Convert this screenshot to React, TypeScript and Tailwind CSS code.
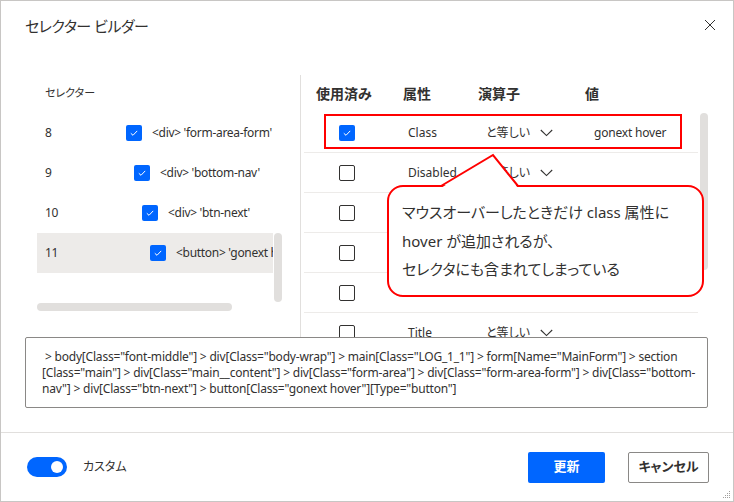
import React from 'react';

const leftRows = [
  { n: 8, depth: 0, label: "<div> 'form-area-form'" },
  { n: 9, depth: 1, label: "<div> 'bottom-nav'" },
  { n: 10, depth: 2, label: "<div> 'btn-next'" },
  { n: 11, depth: 3, label: "<button> 'gonext hover'" },
];

const indents = ['w-0', 'w-[8px]', 'w-[16px]', 'w-[24px]'];

const attrRows = [
  { on: true, attr: 'Class', op: 'と等しい', val: 'gonext hover' },
  { on: false, attr: 'Disabled', op: 'と等しい', val: '' },
  { on: false, attr: '', op: '', val: '' },
  { on: false, attr: '', op: '', val: '' },
  { on: false, attr: '', op: '', val: '' },
  { on: false, attr: 'Title', op: 'と等しい', val: '' },
];

function Check({ on }: { on: boolean }) {
  if (!on) return <span className="block h-4 w-4 shrink-0 rounded-[2px] border border-[#323130]" />;
  return (
    <span className="flex h-4 w-4 shrink-0 items-center justify-center rounded-[2px] bg-[#0066ff]">
      <svg width="10" height="10" viewBox="0 0 10 10">
        <path d="M1.8 5.3 L4 7.3 L8.2 2.9" fill="none" stroke="white" strokeWidth="1" />
      </svg>
    </span>
  );
}

function Chevron() {
  return (
    <svg width="13" height="8" viewBox="0 0 13 8">
      <path d="M0.8 1 L6.5 6.6 L12.2 1" fill="none" stroke="#323130" strokeWidth="1.1" />
    </svg>
  );
}

export default function App() {
  return (
    <div className="relative flex h-[502px] w-[734px] flex-col overflow-hidden border border-[#c8c6c4] bg-white font-['Noto_Sans','Noto_Sans_CJK_JP',sans-serif] text-[#323130] [font-feature-settings:'palt']">
      {/* header */}
      <div className="flex h-[51px] shrink-0 items-center justify-between pl-[24px] pr-[17px]">
        <span className="text-[15px] tracking-[-0.5px]">セレクター ビルダー</span>
        <svg width="12" height="12" viewBox="0 0 12 12" className="mb-[4px]">
          <path d="M1 1 L11 11 M11 1 L1 11" stroke="#323130" strokeWidth="1" />
        </svg>
      </div>

      {/* body */}
      <div className="mt-[21px] flex h-[264px] shrink-0 overflow-hidden">
        <div className="flex w-[282px] shrink-0 flex-col pl-[36px]">
          <div className="flex h-[40px] shrink-0 items-center pl-[8px] text-[11px]">セレクター</div>
          <div className="flex shrink-0 items-start">
            <div className="flex w-[236px] flex-col overflow-hidden">
              {leftRows.map((r) => (
                <div
                  key={r.n}
                  className={`flex h-[40px] shrink-0 items-center pl-[8px] text-[12px] tracking-[-0.3px] whitespace-nowrap ${r.n === 11 ? 'bg-[#edebe9]' : ''}`}
                >
                  <span className="w-[81px] shrink-0">{r.n}</span>
                  <span className={`${indents[r.depth]} shrink-0`} />
                  <Check on />
                  <span className="ml-[10px]">{r.label}</span>
                </div>
              ))}
            </div>
            <div className="ml-[1px] mt-[120px] h-[69px] w-[8px] rounded-full bg-[#e1dfdd]" />
          </div>
          <div className="mt-[1px] h-[8px] w-[195px] shrink-0 rounded-full bg-[#e1dfdd]" />
        </div>

        <div className="ml-[17px] mt-[2px] flex border-l border-[#e1dfdd] pl-[3px]">
          <div className="flex w-[394px] flex-col">
            <div className="flex h-[38px] shrink-0 items-center pb-[2px] text-[14px] font-semibold">
              <span className="w-[86px] pl-[12px]">使用済み</span>
              <span className="w-[80px] pl-[13px]">属性</span>
              <span className="w-[100px] pl-[8px]">演算子</span>
              <span className="w-[128px] pl-[15px]">値</span>
            </div>
            {attrRows.map((r, i) => (
              <div key={i} className="flex h-[40px] shrink-0 items-center border-b border-[#edebe9] text-[12px] whitespace-nowrap">
                <span className="w-[86px] pl-[35px]">
                  <Check on={r.on} />
                </span>
                <span className="w-[80px] pl-[18px]">{r.attr}</span>
                <span className="flex w-[100px] items-center pl-[16px]">
                  {r.op && (
                    <>
                      <span className="w-[54px]">{r.op}</span>
                      <Chevron />
                    </>
                  )}
                </span>
                <span className="w-[128px] pl-[24px] tracking-[-0.2px]">{r.val}</span>
              </div>
            ))}
          </div>
          <div className="ml-[2px] mt-[38px] h-[157px] w-[8px] shrink-0 rounded-full bg-[#e1dfdd]" />
        </div>
      </div>

      {/* selector text */}
      <div className="ml-[24px] h-[71px] w-[683px] shrink-0 rounded-[2px] border border-[#8a8886] pl-[16px] pt-[11px] text-[12px] leading-[16px] tracking-[-0.2px] whitespace-pre">
        <div>{' > body[Class="font-middle"] > div[Class="body-wrap"] > main[Class="LOG_1_1"] > form[Name="MainForm"] > section'}</div>
        <div>{'[Class="main"] > div[Class="main__content"] > div[Class="form-area"] > div[Class="form-area-form"] > div[Class="bottom-'}</div>
        <div>{'nav"] > div[Class="btn-next"] > button[Class="gonext hover"][Type="button"]'}</div>
      </div>

      {/* footer */}
      <div className="mt-[24px] flex flex-1 items-center justify-between border-t border-[#e1dfdd] pl-[26px] pr-[24px]">
        <div className="flex items-center">
          <div className="flex h-[20px] w-[40px] items-center justify-end rounded-full bg-[#0066ff] pr-[4px]">
            <span className="h-[12px] w-[12px] rounded-full bg-white" />
          </div>
          <span className="ml-[16px] text-[12px]">カスタム</span>
        </div>
        <div className="flex items-center">
          <button className="h-[31px] w-[77px] rounded-[2px] bg-[#0066ff] text-[13px] font-semibold text-white">更新</button>
          <button className="ml-[23px] h-[31px] w-[81px] rounded-[2px] border border-[#8a8886] bg-white text-[13px] font-semibold">キャンセル</button>
        </div>
      </div>

      {/* resize grip */}
      <svg width="9" height="9" viewBox="0 0 9 9" className="absolute bottom-[2px] right-[2px]">
        <rect x="7" y="1" width="1" height="1" fill="#a19f9d" />
        <rect x="5" y="3" width="1" height="1" fill="#a19f9d" />
        <rect x="7" y="3" width="1" height="1" fill="#a19f9d" />
        <rect x="3" y="5" width="1" height="1" fill="#a19f9d" />
        <rect x="5" y="5" width="1" height="1" fill="#a19f9d" />
        <rect x="7" y="5" width="1" height="1" fill="#a19f9d" />
        <rect x="1" y="7" width="1" height="1" fill="#a19f9d" />
        <rect x="3" y="7" width="1" height="1" fill="#a19f9d" />
        <rect x="5" y="7" width="1" height="1" fill="#a19f9d" />
        <rect x="7" y="7" width="1" height="1" fill="#a19f9d" />
      </svg>

      {/* annotation: red box around row */}
      <div className="absolute left-[323px] top-[113px] h-[35px] w-[358px] border-2 border-[#ff0000]" />

      {/* annotation: callout */}
      <div className="absolute left-[386px] top-[184px] h-[112px] w-[317px] rounded-[16px] border-2 border-[#ff0000] bg-white pl-[13px] pt-[11px] text-[15px] leading-[28.5px] whitespace-nowrap">
        <div>マウスオーバーしたときだけ class 属性に</div>
        <div>hover が追加されるが、</div>
        <div>セレクタにも含まれてしまっている</div>
      </div>
      <svg width="80" height="38" viewBox="0 0 80 38" className="absolute left-[439px] top-[151px]">
        <polygon points="1,36 53,3 78,36" fill="white" />
        <polyline points="1,34 53,3 78,34" fill="none" stroke="#ff0000" strokeWidth="2" />
      </svg>
    </div>
  );
}
